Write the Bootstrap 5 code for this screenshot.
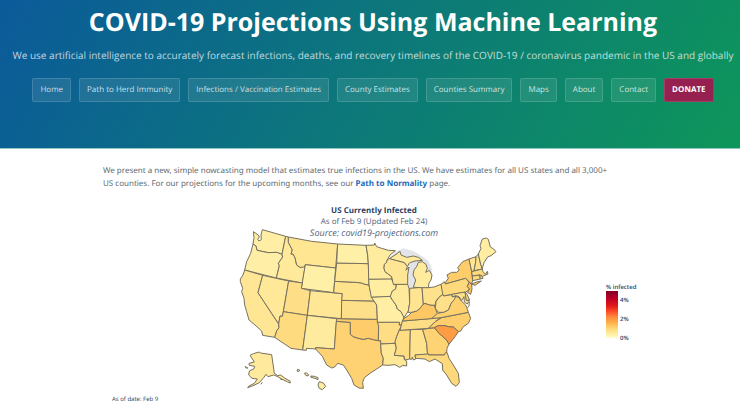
<!DOCTYPE html>
<html lang="en">
<head>
<meta charset="utf-8">
<meta name="viewport" content="width=device-width, initial-scale=1">
<title>COVID-19 Projections Using Machine Learning</title>
<link href="https://cdn.jsdelivr.net/npm/bootstrap@5.3.0/dist/css/bootstrap.min.css" rel="stylesheet">
<style>
body { font-family: "Open Sans", "Noto Sans", sans-serif; font-size: 8px; color: #606c71; text-rendering: geometricPrecision; }
.page-header { background: linear-gradient(120deg, #0b5a9a, #0e965a); padding: 4px 4px 46px 10px; border-bottom: 1px solid #8fc4c0; }
.page-header h1 { font-size: 25px; line-height: 36px; font-weight: 700; margin-bottom: 6px; }
.tagline { font-size: 10px; line-height: 18px; color: rgba(255,255,255,.74); margin-bottom: 14px; }
.site-nav { gap: 8px; }
.nav-btn { font-size: 8px; line-height: 12px; padding: 5px 7px; color: rgba(255,255,255,.78); background: rgba(255,255,255,.09); border: 1px solid rgba(255,255,255,.14); border-radius: 2px; }
.nav-btn:hover { color: #fff; background: rgba(255,255,255,.2); }
.nav-btn.donate { background: #96204f; border-color: #a04066; color: #fff; font-weight: 700; }
.content { padding: 15px 98px 0 103px; }
.intro { font-family: "Noto Sans", "Open Sans", sans-serif; line-height: 13px; margin-bottom: 15px; }
.intro a { color: #1e6bb8; font-weight: 700; text-decoration: none; }
.chart-title { line-height: 11px; color: #51647c; padding-left: 3px; }
.chart-title strong { color: #2a3f5f; }
.chart-title em { font-size: 9px; }
.chart { display: grid; grid-template-columns: 1fr 275px 1fr; margin-top: -14px; }
.chart svg { display: block; width: 100%; }
.state { stroke: #77715f; stroke-width: 3; stroke-linejoin: round; }
.legend { font-size: 6px; line-height: 8px; font-weight: 600; color: #2a3f5f; padding: 58px 0 0 96px; white-space: nowrap; }
.legend-bar { width: 12px; height: 47px; background: linear-gradient(#800026, #bd0026 16%, #e31a1c 32%, #fc4e2a 44%, #fd8d3c 56%, #feb24c 68%, #fed976 80%, #ffeda0 91%, #ffffcc); }
.legend-ticks { height: 46px; margin: 5px 0 0 2px; }
.as-of { font-size: 6px; line-height: 8px; color: #2a3f5f; padding-left: 9px; }
</style>
<script src="https://cdn.jsdelivr.net/npm/bootstrap@5.3.0/dist/js/bootstrap.bundle.min.js"></script>
</head>
<body>
<header class="page-header text-center text-white">
  <h1>COVID-19 Projections Using Machine Learning</h1>
  <p class="tagline">We use artificial intelligence to accurately forecast infections, deaths, and recovery timelines of the COVID-19 / coronavirus pandemic in the US and globally</p>
  <nav class="site-nav d-flex flex-wrap justify-content-center" aria-label="Main">
    <a class="btn nav-btn" href="#">Home</a>
    <a class="btn nav-btn" href="#">Path to Herd Immunity</a>
    <a class="btn nav-btn" href="#">Infections / Vaccination Estimates</a>
    <a class="btn nav-btn" href="#">County Estimates</a>
    <a class="btn nav-btn" href="#">Counties Summary</a>
    <a class="btn nav-btn" href="#">Maps</a>
    <a class="btn nav-btn" href="#">About</a>
    <a class="btn nav-btn" href="#">Contact</a>
    <a class="btn nav-btn donate" href="#">DONATE</a>
  </nav>
</header>
<main class="content">
  <p class="intro">We present a new, simple nowcasting model that estimates true infections in the US. We have estimates for all US states and all 3,000+<br>US counties. For our projections for the upcoming months, see our <a href="#">Path to Normality</a> page.</p>
  <div class="chart-title text-center position-relative z-1"><strong>US Currently Infected</strong><br>As of Feb 9 (Updated Feb 24)<br><em>Source: covid19-projections.com</em></div>
  <div class="chart">
    <div></div>
    <svg viewBox="0 0 825 510" role="img" aria-label="Map of current infections by US state">
      <g fill="#e3e4e7">
        <path d="M463 101L480 80L505 70L535 78L560 93L580 108L592 135L590 155L560 108L535 94L515 98L495 92Z"/>
        <path d="M515 137L522 118L540 108L560 105L543 125L535 140L542 165L537 187L526 192L518 178Z"/>
      </g>
      <g class="state">
        <path fill="#ffeea4" d="M55 20L70 30L73 36L68 43L72 48L79 44L78 30L82 14L152 34L141 88L125 82L100 83L66 76L63 63L54 57L57 38Z"/>
        <path fill="#ffefa6" d="M54 57L63 63L66 76L100 83L125 82L141 88L143 96L130 115L133 122L124 159L29 135L35 110L47 85Z"/>
        <path fill="#ffe694" d="M29 135L83 151L69 203L131 297L132 308L125 318L119 337L83 331L80 318L60 300L42 285L35 260L29 240L27 220L20 200L23 190L16 170L16 162L24 150Z"/>
        <path fill="#ffe898" d="M83 151L161 168L145 260L142 274L135 273L131 297L69 203Z"/>
        <path fill="#ffea9b" d="M152 34L160 36L160 52L172 75L168 87L174 87L180 98L185 120L195 127L211 120L202 174L124 159L133 122L130 115L143 96L141 88Z"/>
        <path fill="#fee693" d="M160 36L230 49L308 57L302 129L211 119L208 126L195 127L185 120L180 98L174 87L168 87L172 75L160 52Z"/>
        <path fill="#fff0a7" d="M211 119L302 129L296 203L199 190Z"/>
        <path fill="#fedf88" d="M161 168L202 174L199 190L226 197L217 271L145 260Z"/>
        <path fill="#ffe795" d="M226 197L322 206L319 281L217 271Z"/>
        <path fill="#fedb7e" d="M145 260L217 271L203 375L168 370L119 337L125 318L132 308L131 297L135 273L142 274Z"/>
        <path fill="#ffeb9d" d="M217 271L305 281L298 372L242 368L243 372L214 370L214 376L203 375Z"/>
        <path fill="#fed272" d="M304 289L346 292L346 328L355 335L370 340L385 343L400 340L415 344L430 347L437 347L439 385L445 400L443 420L425 432L405 445L388 458L383 472L385 490L372 489L357 480L350 460L335 435L325 420L308 415L299 426L290 429L275 420L262 394L242 372L242 368L298 372Z"/>
        <path fill="#fecc6b" d="M305 281L427 283L431 302L430 347L415 344L400 340L385 343L370 340L355 335L346 328L346 292L304 289Z"/>
        <path fill="#fedf89" d="M320 226L417 228L425 240L427 283L319 281Z"/>
        <path fill="#fee28c" d="M299 169L363 172L380 174L390 178L402 180L405 195L411 215L417 228L320 226L322 206L296 203Z"/>
        <path fill="#ffe796" d="M305 114L400 116L402 180L390 178L380 174L363 172L299 169Z"/>
        <path fill="#fff0a8" d="M308 57L393 61L398 90L400 116L305 114Z"/>
        <path fill="#ffec9f" d="M393 61L418 60L419 54L425 65L440 70L460 76L481 77L465 90L457 104L455 112L448 118L447 130L450 140L470 155L470 163L401 163L400 116L398 90Z"/>
        <path fill="#ffeda2" d="M401 163L470 162L474 172L484 180L482 192L472 198L470 210L466 215L409 217L402 180Z"/>
        <path fill="#ffeea3" d="M409 217L466 214L470 222L483 240L487 252L498 260L507 275L500 300L492 300L494 292L427 292L427 283L425 240L417 228Z"/>
        <path fill="#fedd84" d="M427 292L494 292L492 300L500 300L493 315L485 335L480 355L437 357L437 347L430 347L431 302Z"/>
        <path fill="#fee796" d="M437 357L480 355L484 370L478 391L507 393L508 404L515 408L515 423L504 421L494 427L480 419L460 421L443 420L445 400L439 385Z"/>
        <path fill="#fedd83" d="M493 315L526 314L524 402L510 405L507 393L478 391L484 370L480 350L485 335Z"/>
        <path fill="#fee28c" d="M526 314L563 313L575 355L578 388L540 390L542 402L535 405L532 396L530 403L524 402Z"/>
        <path fill="#fed373" d="M563 313L598 308L612 325L635 345L642 357L636 370L635 383L628 390L582 390L577 382L575 355Z"/>
        <path fill="#fed97b" d="M540 390L577 387L582 390L628 390L632 382L637 384L642 400L655 420L670 445L673 473L663 484L650 475L635 450L623 435L622 416L600 402L583 410L570 402L542 400Z"/>
        <path fill="#fece6c" d="M580 310L600 290L620 278L700 262L707 280L700 295L685 305L677 318L670 320L655 306L640 305L630 302L610 302L598 308Z"/>
        <path fill="#fd9c42" d="M598 308L610 302L630 302L640 305L655 306L670 320L660 335L642 358L635 345L612 325Z"/>
        <path fill="#fede85" d="M502 288L618 278L600 290L580 310L495 316Z"/>
        <path fill="#fdc763" d="M507 280L520 272L530 262L545 258L555 250L562 240L570 235L585 240L597 240L603 255L607 265L600 275L588 281L502 288Z"/>
        <path fill="#ffe99b" d="M474 178L518 178L522 190L524 235L520 258L507 278L498 260L487 252L483 240L470 222L466 214L472 198L482 192L484 180Z"/>
        <path fill="#ffe492" d="M524 190L561 187L565 237L555 250L545 258L530 262L519 262L524 235Z"/>
        <path fill="#fee18b" d="M561 187L580 188L597 186L620 177L624 208L612 217L603 228L600 241L585 240L570 235L565 237Z"/>
        <path fill="#ffeb9e" d="M535 187L542 165L534 150L537 135L546 123L550 112L562 110L573 118L577 130L572 142L583 136L591 150L588 165L582 174L580 188L561 188Z"/>
        <path fill="#ffe99a" d="M463 101L483 88L495 79L498 90L515 97L535 93L550 97L562 106L540 108L523 114L517 125L508 113L485 107Z"/>
        <path fill="#ffe695" d="M457 104L463 101L485 107L508 113L517 125L513 136L522 126L518 150L518 178L475 178L470 155L450 140L447 130L448 118L455 112Z"/>
        <path fill="#fecc69" d="M631 173L640 160L636 150L650 142L665 142L673 135L668 128L683 110L702 102L706 120L710 140L713 168L709 177L692 160L631 177Z"/>
        <path fill="#feda7d" d="M618 178L628 170L631 177L692 160L702 172L697 185L704 192L693 201L624 213Z"/>
        <path fill="#fdc15b" d="M702 172L710 177L711 192L707 208L697 202L704 192L697 185Z"/>
        <path fill="#fdc763" d="M709 177L725 171L739 168L720 181Z"/>
        <path fill="#ffe694" d="M702 102L723 95L722 112L717 137L710 140L706 120Z"/>
        <path fill="#fee18b" d="M723 95L730 87L737 118L742 132L717 137L722 112Z"/>
        <path fill="#ffeda2" d="M730 87L738 70L735 62L742 42L754 39L760 43L766 66L776 72L783 80L768 92L758 96L747 113L742 130L737 118Z"/>
        <path fill="#fed97c" d="M710 140L742 132L744 140L751 148L757 139L759 147L742 154L734 150L712 153Z"/>
        <path fill="#fed87b" d="M712 153L734 150L736 162L713 167Z"/>
        <path fill="#fece6c" d="M734 150L742 154L744 160L736 162Z"/>
        <path fill="#fed16f" d="M590 281L607 265L625 262L640 255L648 235L662 215L670 216L679 228L692 240L696 250L700 262L618 278Z"/>
        <path fill="#fee18b" d="M650 208L690 201L694 225L703 226L697 237L688 231L687 215L680 227L672 215L662 212L652 216Z"/>
        <path fill="#fed97b" d="M690 201L696 208L704 225L694 226Z"/>
        <path fill="#ffe08a" d="M624 208L626 213L650 209L652 216L662 213L658 224L648 235L640 255L625 262L610 262L601 250L603 230L612 217Z"/>
        <path fill="#ffe99c" d="M45 391L55 386L72 381L77 384L110 389L118 445L128 452L137 450L150 460L165 468L166 474L158 471L140 462L126 454L116 450L99 455L93 448L86 458L73 473L50 484L38 488L42 483L58 475L67 462L51 460L41 450L43 438L57 431L59 424L43 421L42 415L58 411Z"/>
        <path fill="#ffeda1" d="M188 433L194 435L191 440L186 438ZM209 444L215 444L221 449L219 453L211 450ZM227 453L238 454L249 458L249 464L240 460L228 457ZM253 470L265 474L272 484L262 494L253 490L249 480ZM30 425L38 428L36 431Z"/>
        <path fill="none" d="M78 478L82 472M136 463L144 464M703 230L702 244L697 248"/>
      </g>
    </svg>
    <aside class="legend" aria-label="Percent infected">
      <div>% infected</div>
      <div class="d-flex">
        <div class="legend-bar"></div>
        <div class="legend-ticks d-flex flex-column justify-content-between"><span>4%</span><span>2%</span><span>0%</span></div>
      </div>
    </aside>
  </div>
  <div class="as-of">As of date: Feb 9</div>
</main>
</body>
</html>
